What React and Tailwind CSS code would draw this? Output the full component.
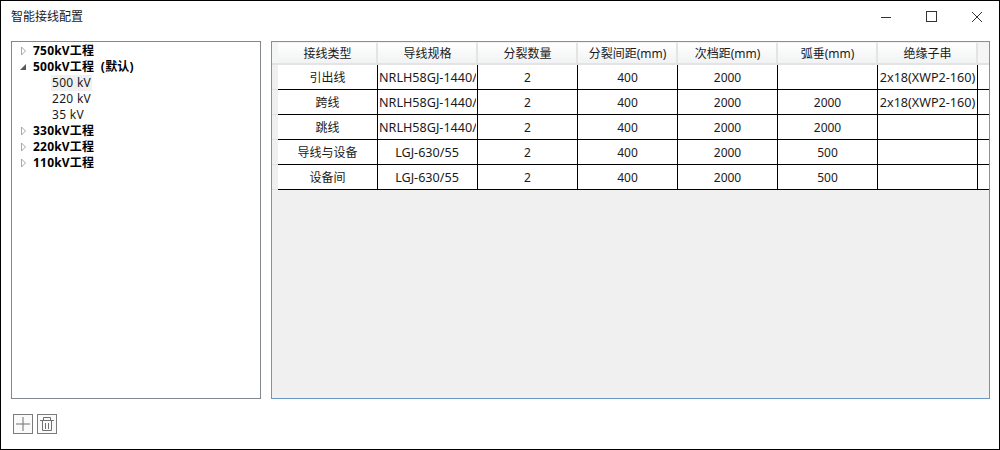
import React from "react";

const font = { fontFamily: '"Noto Sans", "Noto Sans CJK SC", sans-serif' };

const headers = ["接线类型", "导线规格", "分裂数量", "分裂间距(mm)", "次档距(mm)", "弧垂(mm)", "绝缘子串"];

const rows = [
  ["引出线", "NRLH58GJ-1440/120", "2", "400", "2000", "", "2x18(XWP2-160)"],
  ["跨线", "NRLH58GJ-1440/120", "2", "400", "2000", "2000", "2x18(XWP2-160)"],
  ["跳线", "NRLH58GJ-1440/120", "2", "400", "2000", "2000", ""],
  ["导线与设备", "LGJ-630/55", "2", "400", "2000", "500", ""],
  ["设备间", "LGJ-630/55", "2", "400", "2000", "500", ""],
];

function Arrow({ open }) {
  if (open) {
    return (
      <svg width="8" height="8" viewBox="0 0 8 8" className="shrink-0">
        <path d="M7 1V7H1Z" fill="#595959" />
      </svg>
    );
  }
  return (
    <svg width="8" height="10" viewBox="0 0 8 10" className="shrink-0">
      <path d="M2.5 1V9L6.5 5Z" fill="#fff" stroke="#a6a6a6" />
    </svg>
  );
}

function TreeGroup({ label, open, children }) {
  return (
    <div>
      <div className="flex h-4 items-center">
        <div className="flex w-[21px] justify-center pl-[1px]">
          <Arrow open={open} />
        </div>
        <span className="font-bold text-black whitespace-pre tracking-[0.2px]">{label}</span>
      </div>
      {children}
    </div>
  );
}

function TreeLeaf({ label, selected }) {
  return (
    <div className="flex h-4 items-center pl-[39px]">
      <span className={"px-[1px] leading-4 tracking-[0.3px] text-[#1a1a1a] " + (selected ? "bg-[#f0f0f0]" : "")}>{label}</span>
    </div>
  );
}

// the spec and insulator columns hold wider latin text than the rest
function cellText(cell) {
  if (cell.startsWith("NRLH")) return "w-[97px] shrink-0 overflow-hidden pt-[1px] text-[12.6px]";
  if (cell.startsWith("LGJ")) return "pt-[1px] pr-[1px] text-[12.6px]";
  if (cell.startsWith("2x18")) return "pt-[1px] text-[12.6px]";
  return "";
}

function Grid() {
  return (
    <div className="flex-1 border border-[#6d95c1] bg-[#f0f0f0] overflow-hidden">
      <div className="flex h-[23px] pt-[1px]">
        <div className="w-[6px] shrink-0 bg-[#f5f5f5] border-b-2 border-[#e2e2e2]" />
        {headers.map((h) => (
          <div
            key={h}
            className="w-[100px] shrink-0 flex items-center justify-center pl-[1px] pt-[1px] border-r-2 border-b-2 border-[#e4e4e4] bg-gradient-to-b from-white to-[#f1f2f3] text-[#1a1a1a] whitespace-nowrap"
          >
            {h}
          </div>
        ))}
        <div className="flex-1 bg-[#f5f5f5] border-b-2 border-[#e2e2e2]" />
      </div>
      {rows.map((row, i) => (
        <div key={i} className="flex h-[25px]">
          <div className="w-[6px] shrink-0 bg-[#f0f0f0] border-b border-[#e2e2e2]" />
          {row.map((cell, j) => (
            <div
              key={j}
              className="w-[100px] shrink-0 flex items-center justify-center overflow-hidden pt-[1px] border-r border-b border-black bg-white text-[#1a1a1a] whitespace-nowrap"
            >
              <span className={cellText(cell)}>{cell}</span>
            </div>
          ))}
          <div className="flex-1 border-b border-black bg-white" />
        </div>
      ))}
    </div>
  );
}

export default function App() {
  return (
    <div style={font} className="flex h-[450px] w-[1000px] flex-col border border-black bg-white text-[12px] overflow-hidden">
      <div className="flex h-[30px] shrink-0 items-center justify-between pl-[10px] pt-[1px]">
        <span className="text-[#1a1a1a]">智能接线配置</span>
        <div className="flex items-center">
          <svg width="12" height="12" viewBox="0 0 12 12" className="mr-[33px]">
            <path d="M1 6.5H11" stroke="#333" />
          </svg>
          <svg width="12" height="12" viewBox="0 0 12 12" className="mr-[34px]">
            <rect x="1.5" y="0.5" width="10" height="10" fill="none" stroke="#333" />
          </svg>
          <svg width="12" height="12" viewBox="0 0 12 12" className="mr-[16px]">
            <path d="M1 1L11 11M11 1L1 11" stroke="#333" />
          </svg>
        </div>
      </div>
      <div className="flex h-[358px] shrink-0 gap-[10px] pl-[10px] pr-[9px] mt-[10px]">
        <div className="w-[250px] shrink-0 border border-[#828790] bg-white pt-[1px]">
          <TreeGroup label="750kV工程" />
          <TreeGroup label="500kV工程  (默认)" open>
            <TreeLeaf label="500 kV" selected />
            <TreeLeaf label="220 kV" />
            <TreeLeaf label="35 kV" />
          </TreeGroup>
          <TreeGroup label="330kV工程" />
          <TreeGroup label="220kV工程" />
          <TreeGroup label="110kV工程" />
        </div>
        <Grid />
      </div>
      <div className="flex gap-[4px] pl-[12px] pt-[15px]">
        <button className="flex h-5 w-5 items-center justify-center border border-[#7a7a7a] bg-[#fafafa]">
          <svg width="14" height="14" viewBox="0 0 14 14">
            <path d="M7 0V14M0 7H14" stroke="#707070" />
          </svg>
        </button>
        <button className="flex h-5 w-5 items-center justify-center border border-[#7a7a7a] bg-[#fafafa]">
          <svg width="18" height="18" viewBox="0 0 18 18">
            <path d="M2 5.5H16M5.5 5.5V2.5H12.5V5.5M4.5 5.5V15.5H13.5V5.5M7.5 8V14M10.5 8V14" fill="none" stroke="#707070" />
          </svg>
        </button>
      </div>
    </div>
  );
}
